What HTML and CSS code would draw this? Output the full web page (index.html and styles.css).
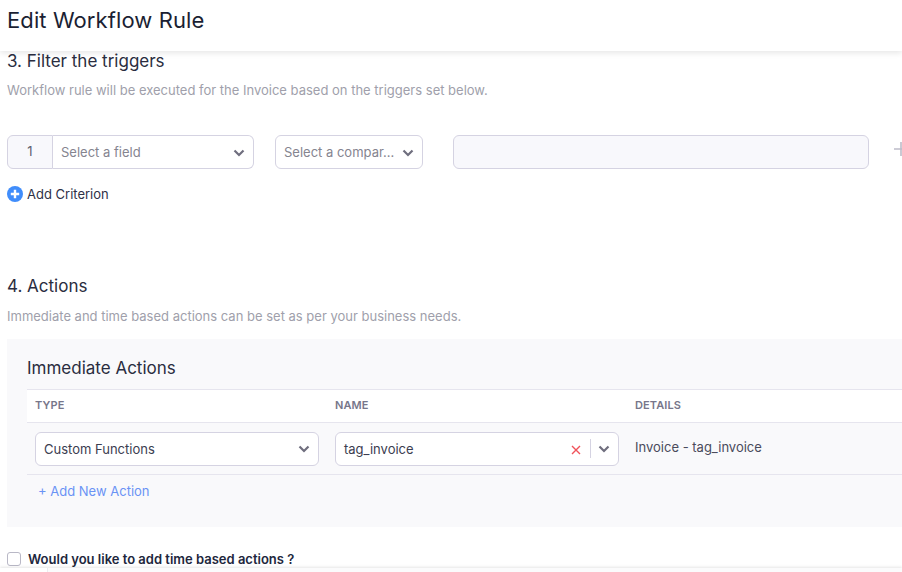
FILE: index.html
```html
<!DOCTYPE html>
<html lang="en">
<head>
    <meta charset="UTF-8">
    <meta name="viewport" content="width=device-width, initial-scale=1.0">
    <title>Edit Workflow Rule</title>
    <link rel="stylesheet" href="styles.css">
</head>
<body>
    <header class="page-header">
        <h1>Edit Workflow Rule</h1>
    </header>

    <main class="content">
        <section class="triggers">
            <h2>3. Filter the triggers</h2>
            <p class="hint">Workflow rule will be executed for the Invoice based on the triggers set below.</p>

            <div class="criterion">
                <div class="field-group">
                    <span class="index">1</span>
                    <div class="select select-joined">
                        <span class="placeholder">Select a field</span>
                        <svg class="chevron" viewBox="0 0 12 8"><path d="M1.5 1.5 6 6l4.500-4.500"/></svg>
                    </div>
                </div>
                <div class="select select-compare">
                    <span class="placeholder">Select a compar...</span>
                    <svg class="chevron" viewBox="0 0 12 8"><path d="M1.5 1.5 6 6l4.500-4.500"/></svg>
                </div>
                <div class="value-input"></div>
                <svg class="row-add" viewBox="0 0 14 14"><path d="M7 0v14M0 7h14"/></svg>
            </div>

            <a class="add-criterion">
                <svg class="plus-circle" viewBox="0 0 16 16"><circle cx="8" cy="8" r="8"/><path d="M8 3.800v8.400M3.800 8h8.400"/></svg>
                Add Criterion
            </a>
        </section>

        <section class="actions">
            <h2>4. Actions</h2>
            <p class="hint">Immediate and time based actions can be set as per your business needs.</p>

            <div class="panel">
                <h3>Immediate Actions</h3>
                <div class="table-head">
                    <div class="col-type">TYPE</div>
                    <div class="col-name">NAME</div>
                    <div class="col-details">DETAILS</div>
                </div>
                <div class="table-row">
                    <div class="col-type">
                        <div class="select">
                            <span>Custom Functions</span>
                            <svg class="chevron" viewBox="0 0 12 8"><path d="M1.5 1.5 6 6l4.500-4.500"/></svg>
                        </div>
                    </div>
                    <div class="col-name">
                        <div class="select">
                            <span>tag_invoice</span>
                            <svg class="clear" viewBox="0 0 10 10"><path d="M1 1l8 8M9 1l-8 8"/></svg>
                            <i class="divider"></i>
                            <svg class="chevron" viewBox="0 0 12 8"><path d="M1.5 1.5 6 6l4.500-4.500"/></svg>
                        </div>
                    </div>
                    <div class="col-details">Invoice - tag_invoice</div>
                </div>
                <a class="add-action">+ Add New Action</a>
            </div>

            <label class="time-based">
                <span class="checkbox"></span>
                Would you like to add time based actions ?
            </label>
        </section>
    </main>

    <div class="page-footer"><div class="footer-side"></div></div>
</body>
</html>
```

FILE: styles.css
```css
* {
    box-sizing: border-box;
}

html, body {
    height: 100%;
}

body {
    margin: 0;
    overflow: hidden;
    position: relative;
    background-color: #fff;
    color: #2e3147;
    font-family: Inter, "Liberation Sans", sans-serif;
    font-size: 13px;
}

.page-header {
    height: 51px;
    padding: 7px 7px 0;
    background-color: #fff;
    box-shadow: 0 2px 6px rgba(0, 0, 0, 0.1);
    position: relative;
}

h1 {
    margin: 0;
    font-size: 22px;
    line-height: 27px;
    font-weight: 400;
    letter-spacing: 0.1px;
    color: #1b1f33;
}

h2,
h3 {
    margin: 0;
    font-size: 17px;
    line-height: 20px;
    font-weight: 400;
    color: #2a2d40;
}

.content {
    padding-left: 7px;
}

.hint {
    margin: 11px 0 0;
    color: #a09fab;
    font-size: 13px;
    line-height: 16px;
}

.triggers {
    height: 225px;
}

.criterion {
    display: flex;
    align-items: center;
    margin-top: 37px;
    width: 920px;
}

.field-group {
    display: flex;
    width: 247px;
    height: 34px;
}

.index {
    width: 46px;
    padding-top: 7px;
    text-align: center;
    background-color: #f8f8fc;
    border: 1px solid #d5d3e2;
    border-radius: 6px 0 0 6px;
    color: #5f5f70;
}

.select {
    display: flex;
    align-items: center;
    height: 34px;
    padding: 0 8px;
    background-color: #fff;
    border: 1px solid #d5d3e2;
    border-radius: 6px;
    color: #3b3d50;
}

.select > span {
    flex: 1;
    white-space: nowrap;
}

.select .placeholder {
    color: #85848f;
}

.select-joined {
    flex: 1;
    border-left: 0;
    border-radius: 0 6px 6px 0;
}

.select-compare {
    width: 148px;
    margin-left: 21px;
}

.chevron {
    width: 12px;
    height: 8px;
    margin-top: 1px;
    fill: none;
    stroke: #6f6e7e;
    stroke-width: 2.200;
}

.value-input {
    width: 416px;
    height: 34px;
    margin-left: 30px;
    background-color: #f8f8fc;
    border: 1px solid #d5d3e2;
    border-radius: 6px;
}

.row-add {
    width: 14px;
    height: 14px;
    margin: -7px 0 0 25px;
    fill: none;
    stroke: #bdbcc9;
    stroke-width: 1.600;
}

.add-criterion {
    display: flex;
    align-items: center;
    gap: 4px;
    margin-top: 17px;
    line-height: 16px;
}

.plus-circle {
    width: 16px;
    height: 16px;
}

.plus-circle circle {
    fill: #408dfb;
}

.plus-circle path {
    fill: none;
    stroke: #fff;
    stroke-width: 2.400;
}

.actions .hint {
    margin-top: 12px;
}

.panel {
    height: 188px;
    margin-top: 15px;
    padding: 19px 0 0 20px;
    background-color: #f9f9fb;
}

.table-head,
.table-row {
    display: flex;
}

.table-head {
    height: 34px;
    margin-top: 11px;
    padding-bottom: 2px;
    align-items: center;
    background-color: #fff;
    border-top: 1px solid #e6e5ee;
    border-bottom: 1px solid #e6e5ee;
    color: #77768a;
    font-size: 11px;
    font-weight: 600;
    letter-spacing: 0.1px;
}

.table-row {
    height: 52px;
    align-items: center;
    border-bottom: 1px solid #e6e5ee;
}

.col-type,
.col-name {
    width: 300px;
    padding: 0 8px;
}

.col-details {
    padding: 0 8px;
}

.table-row .col-details {
    margin-top: -4px;
    color: #4a4b5c;
}

.clear {
    width: 10px;
    height: 10px;
    margin-top: 2px;
    fill: none;
    stroke: #f0525a;
    stroke-width: 1.400;
}

.divider {
    width: 1px;
    height: 19px;
    margin: 0 7px 0 9px;
    background-color: #d5d3e2;
}

.add-action {
    display: block;
    margin: 8px 0 0 11px;
    line-height: 16px;
    color: #6a93f5;
}

.time-based {
    display: flex;
    align-items: center;
    gap: 7px;
    margin-top: 24px;
    line-height: 16px;
    font-weight: 600;
    color: #21263c;
}

.checkbox {
    width: 14px;
    height: 14px;
    background-color: #fff;
    border: 1px solid #b9b8c6;
    border-radius: 3px;
}

.page-footer {
    position: absolute;
    left: 0;
    right: 0;
    bottom: 0;
    height: 4px;
    background-color: #fbfbfc;
    box-shadow: 0 -1px 3px rgba(0, 0, 0, 0.1);
}

.footer-side {
    width: 48px;
    height: 100%;
    background-color: #fff;
    border-right: 1px solid #ececf0;
}
```
